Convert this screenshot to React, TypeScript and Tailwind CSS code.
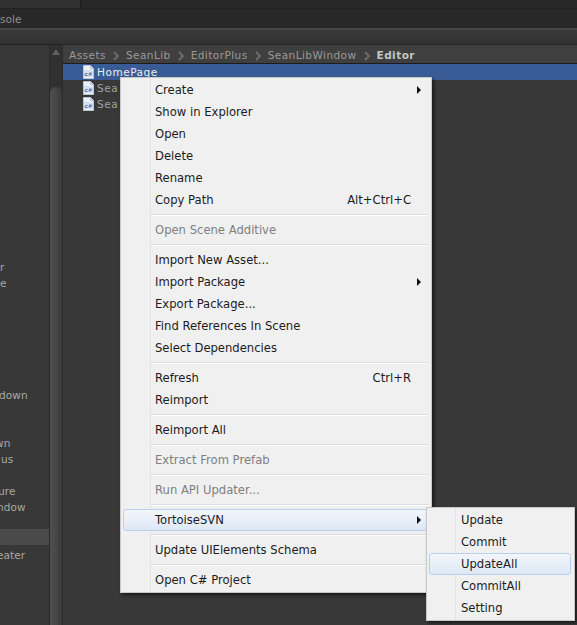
const sideRows: Record<number, { text: string; shift?: string }> = {
  13: { text: "r" },
  14: { text: "e" },
  21: { text: "down", shift: "-ml-[1px]" },
  24: { text: "wn", shift: "-ml-[5px]" },
  25: { text: "us", shift: "ml-[1px]" },
  27: { text: "ure", shift: "-ml-[2px]" },
  28: { text: "ndow", shift: "-ml-[3px]" },
  31: { text: "eater", shift: "-ml-[3px]" },
};
const rowIndexes = Array.from({ length: 37 }, (_, i) => i);

function Cs() {
  return (
    <svg width="11" height="14" viewBox="0 0 11 14" className="shrink-0">
      <path d="M0.5 0.5H7.5L10.5 3.5V13.5H0.5Z" fill="#eef2f8" stroke="#b9c4d6" />
      <path d="M7.5 0.5V3.5H10.5" fill="#cfd8e6" stroke="#b9c4d6" />
      <rect x="1" y="5" width="9" height="7" fill="#d5e0f0" />
      <text x="1.5" y="11" fontSize="6" fontWeight="700" fill="#3f63a8" fontFamily="Liberation Sans, sans-serif">
        c#
      </text>
    </svg>
  );
}

function Arrow() {
  return <div className="h-0 w-0 border-y-[4px] border-l-[4px] border-y-transparent border-l-[#111]" />;
}

function Chevron() {
  return (
    <svg width="6" height="10" viewBox="0 0 6 10" className="shrink-0">
      <path d="M1 1L5 5L1 9" fill="none" stroke="#6e6e6e" strokeWidth="1.8" />
    </svg>
  );
}

function Item({ label, hint, arrow, off }: { label: string; hint?: string; arrow?: boolean; off?: boolean }) {
  return (
    <div className={`flex h-[22px] items-center pl-[34px] pr-[20px] ${off ? "text-[#7f7f7f]" : "text-[#1c1c1c]"}`}>
      <span className="pt-[2px]">{label}</span>
      {hint && <span className="ml-auto pt-[2px]">{hint}</span>}
      {arrow && (
        <span className="ml-auto -mr-[10px]">
          <Arrow />
        </span>
      )}
    </div>
  );
}

function Sep() {
  return (
    <div className="flex h-2 flex-col justify-center pl-[30px] pr-[2px]">
      <div className="h-px bg-[#dcdcdc]" />
      <div className="h-px bg-white" />
    </div>
  );
}

export default function App() {
  return (
    <div className="relative flex h-[625px] w-[577px] flex-col overflow-hidden bg-[#383838] font-['Liberation_Sans',sans-serif]">
      <div className="flex h-[8px] bg-[#272727]">
        <div className="w-[81px] border-r border-[#1d1d1d] bg-[#313131]" />
      </div>
      <div className="flex h-[20px] items-center border-t border-[#222] bg-[#282828] pt-[3px] font-['DejaVu_Sans',sans-serif] text-[10.5px] tracking-[0.1px] text-[#8f8f8f]">
        sole
      </div>
      <div className="h-[16px] border-t-2 border-[#464646] bg-gradient-to-b from-[#3a3a3a] to-[#313131]" />

      <div className="flex min-h-0 flex-1 border-t border-[#222]">
        <div className="w-[49px] overflow-hidden pt-[4px] font-['DejaVu_Sans',sans-serif] text-[10.5px] tracking-[0.1px] text-[#a8a8a8]">
          {rowIndexes.map((i) => (
            <div key={i} className={`flex h-4 items-center pt-[6px] ${i === 30 ? "bg-[#4a4a4a]" : ""}`}>
              <span className={sideRows[i]?.shift}>{sideRows[i]?.text}</span>
            </div>
          ))}
        </div>

        <div className="flex w-[14px] flex-col border-x border-[#2a2a2a] bg-[#303030]">
          <div className="flex h-[42px] justify-center pt-[4px]">
            <div className="h-0 w-0 border-x-[4px] border-b-[6px] border-x-transparent border-b-[#5e5e5e]" />
          </div>
          <div className="flex-1 rounded-t-[6px] bg-gradient-to-r from-[#505050] via-[#474747] to-[#383838]" />
        </div>

        <div className="flex min-w-0 flex-1 flex-col">
          <div className="flex h-[19px] items-center gap-[7px] whitespace-nowrap border-b border-[#1c1c1c] bg-[#3f3f3f] pl-[6px] pt-[3px] font-['DejaVu_Sans',sans-serif] text-[10.5px] tracking-[0.45px] text-[#9a9a9a]">
            <span>Assets</span>
            <Chevron />
            <span>SeanLib</span>
            <Chevron />
            <span>EditorPlus</span>
            <Chevron />
            <span>SeanLibWindow</span>
            <Chevron />
            <span className="font-bold text-[#c4c4c4]">Editor</span>
          </div>
          <div className="flex h-4 items-center gap-[3px] bg-[#3a5c96] pl-[20px] font-['DejaVu_Sans',sans-serif] text-[10.5px] tracking-[0.55px] text-[#ececec]">
            <Cs />
            <span className="pt-[2px]">HomePage</span>
          </div>
          <div className="flex h-4 items-center gap-[3px] pl-[20px] font-['DejaVu_Sans',sans-serif] text-[10.5px] tracking-[0.55px] text-[#a0a0a0]">
            <Cs />
            <span className="pt-[2px]">Sea</span>
          </div>
          <div className="flex h-4 items-center gap-[3px] pl-[20px] font-['DejaVu_Sans',sans-serif] text-[10.5px] tracking-[0.55px] text-[#a0a0a0]">
            <Cs />
            <span className="pt-[2px]">Sea</span>
          </div>
        </div>
      </div>

      {/* context menu */}
      <div className="absolute left-[120px] top-[77px] h-[516px] w-[312px] border border-[#c8c8c8] bg-[#f0f0f0] font-['DejaVu_Sans',sans-serif] text-[11.6px] shadow-[2px_2px_3px_rgba(0,0,0,0.55)]">
        <div className="absolute bottom-0 left-[29px] top-0 w-px bg-[#e2e3e3]" />
        <div className="relative pt-[1px]">
          <Item label="Create" arrow />
          <Item label="Show in Explorer" />
          <Item label="Open" />
          <Item label="Delete" />
          <Item label="Rename" />
          <Item label="Copy Path" hint="Alt+Ctrl+C" />
          <Sep />
          <Item label="Open Scene Additive" off />
          <Sep />
          <Item label="Import New Asset..." />
          <Item label="Import Package" arrow />
          <Item label="Export Package..." />
          <Item label="Find References In Scene" />
          <Item label="Select Dependencies" />
          <Sep />
          <Item label="Refresh" hint="Ctrl+R" />
          <Item label="Reimport" />
          <Sep />
          <Item label="Reimport All" />
          <Sep />
          <Item label="Extract From Prefab" off />
          <Sep />
          <Item label="Run API Updater..." off />
          <Sep />
          <div className="relative">
            <div className="absolute inset-x-[2px] inset-y-0 rounded-[3px] border border-[#b8d0ec] bg-gradient-to-b from-[#f3f6fa] to-[#dde8f5]" />
            <div className="relative">
              <Item label="TortoiseSVN" arrow />
            </div>
          </div>
          <Sep />
          <Item label="Update UIElements Schema" />
          <Sep />
          <Item label="Open C# Project" />
        </div>
      </div>

      {/* submenu */}
      <div className="absolute left-[426px] top-[507px] h-[114px] w-[149px] border border-[#c8c8c8] bg-[#f0f0f0] font-['DejaVu_Sans',sans-serif] text-[11.6px] text-[#1c1c1c] shadow-[2px_2px_3px_rgba(0,0,0,0.55)]">
        <div className="absolute bottom-0 left-[28px] top-0 w-px bg-[#e2e3e3]" />
        <div className="relative pt-[1px]">
          {["Update", "Commit", "UpdateAll", "CommitAll", "Setting"].map((label) => (
            <div key={label} className="relative flex h-[22px] items-center pl-[34px]">
              {label === "UpdateAll" && (
                <div className="absolute left-[2px] right-[3px] inset-y-0 rounded-[3px] border border-[#b8d0ec] bg-gradient-to-b from-[#f3f6fa] to-[#dde8f5]" />
              )}
              <span className="relative pt-[2px]">{label}</span>
            </div>
          ))}
        </div>
      </div>
    </div>
  );
}
